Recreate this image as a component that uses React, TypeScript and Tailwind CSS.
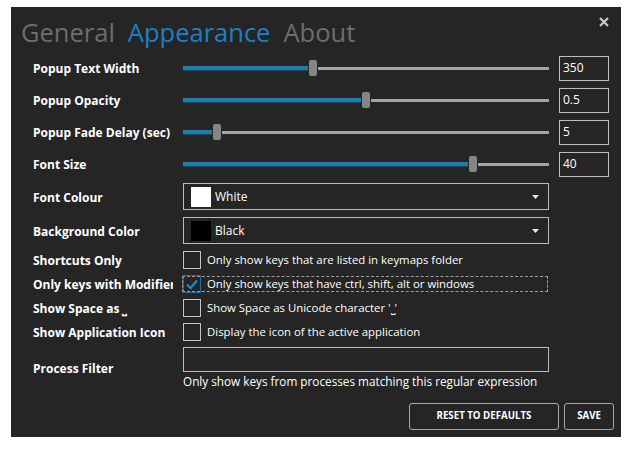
import React from "react";

const font = { fontFamily: '"Open Sans", "Noto Sans", sans-serif' };

function Slider({ blue }: { blue: number }) {
  return (
    <div className="flex items-center h-[16px] w-[366px]">
      <div className="h-[5px] flex flex-col shrink-0" style={{ width: blue }}>
        <div className="h-[4px] bg-[#1b7fb5]" />
        <div className="h-[1px] bg-[#33414a]" />
      </div>
      <div className="w-[8px] h-[16px] mx-[1px] rounded-[2px] bg-[#858585] shrink-0" />
      <div className="flex-1 h-[3px] bg-[#a3a3a3]" />
    </div>
  );
}

function Label({ children }: { children: React.ReactNode }) {
  return (
    <div className="w-[140px] mr-[10px] pt-[2px] shrink-0 overflow-hidden whitespace-nowrap text-white font-bold text-[12px]">
      {children}
    </div>
  );
}

function SliderRow({ label, blue, value }: { label: string; blue: number; value: string }) {
  return (
    <div className="flex items-center h-[32px]">
      <Label>{label}</Label>
      <Slider blue={blue} />
      <div className="ml-[10px] w-[50px] h-[25px] border border-[#bdbdbd] text-white text-[12px] flex items-center pl-[3px]">
        {value}
      </div>
    </div>
  );
}

function Dropdown({ label, swatch, text }: { label: string; swatch: string; text: string }) {
  return (
    <div className="flex items-center h-[27px]">
      <Label>{label}</Label>
      <div className="w-[366px] h-[27px] border border-[#bcbcbc] flex items-center pl-[7px] pr-[9px]">
        <div className="w-[20px] h-[20px]" style={{ background: swatch }} />
        <span className="ml-[4px] text-white text-[12px] flex-1">{text}</span>
        <svg width="7" height="4" viewBox="0 0 7 4">
          <path d="M0 0 H7 L3.5 4 Z" fill="#e8e8e8" />
        </svg>
      </div>
    </div>
  );
}

function CheckRow({
  label,
  text,
  checked,
  focused,
}: {
  label: React.ReactNode;
  text: string;
  checked?: boolean;
  focused?: boolean;
}) {
  return (
    <div className="flex items-center h-[24px]">
      <Label>{label}</Label>
      <div
        className={
          focused
            ? "flex items-center h-[14px] w-[364px] outline-1 outline-dashed outline-[#9c9c9c]"
            : "flex items-center h-[14px]"
        }
      >
        <div
          className={
            checked
              ? "w-[18px] h-[18px] shrink-0 border border-[#1e6ea3] flex items-center justify-center"
              : "w-[18px] h-[18px] shrink-0 border border-[#c4c4c4]"
          }
        >
          {checked && (
            <svg width="12" height="11" viewBox="0 0 12 11">
              <path d="M1 5.5 L4.5 9 L11 1.5" stroke="#2386c8" strokeWidth="2.4" fill="none" />
            </svg>
          )}
        </div>
        <span className="ml-[6px] text-white text-[11.4px] whitespace-nowrap">{text}</span>
      </div>
    </div>
  );
}

export default function App() {
  return (
    <div className="w-[625px] h-[452px] bg-white pt-[7px] pl-[11px]" style={font}>
      <div className="w-[610px] h-[430px] bg-[#252525] flex flex-col">
        <div className="flex items-start h-[45px]">
          <div className="flex gap-[13px] pl-[10px] pt-[8px] text-[25.5px] leading-[34px]">
            <span className="text-[#6d6d6d]">General</span>
            <span className="text-[#1c80c3]">Appearance</span>
            <span className="text-[#6d6d6d]">About</span>
          </div>
          <div className="ml-auto mr-[12px] mt-[10px]">
            <svg width="10" height="10" viewBox="0 0 10 10">
              <path d="M1 1 L9 9 M9 1 L1 9" stroke="#c9c9c9" strokeWidth="2.2" />
            </svg>
          </div>
        </div>
        <div className="pl-[22px] flex flex-col">
          <SliderRow label="Popup Text Width" blue={125} value="350" />
          <SliderRow label="Popup Opacity" blue={178} value="0.5" />
          <SliderRow label="Popup Fade Delay (sec)" blue={29} value="5" />
          <SliderRow label="Font Size" blue={285} value="40" />
          <div className="mt-[3px] flex flex-col gap-[7px]">
            <Dropdown label="Font Colour" swatch="#ffffff" text="White" />
            <Dropdown label="Background Color" swatch="#000000" text="Black" />
          </div>
          <div className="mt-[4px] flex flex-col">
            <CheckRow label="Shortcuts Only" text="Only show keys that are listed in keymaps folder" />
            <CheckRow
              label="Only keys with Modifiers"
              text="Only show keys that have ctrl, shift, alt or windows"
              checked
              focused
            />
            <CheckRow label="Show Space as ⎵" text="Show Space as Unicode character '⎵'" />
            <CheckRow label="Show Application Icon" text="Display the icon of the active application" />
          </div>
          <div className="mt-[3px] flex items-center">
            <Label>Process Filter</Label>
            <div className="flex flex-col">
              <div className="w-[366px] h-[25px] border border-[#bcbcbc]" />
              <div className="text-white text-[11.75px] leading-[16px] mt-[1px] whitespace-nowrap">
                Only show keys from processes matching this regular expression
              </div>
            </div>
          </div>
        </div>
        <div className="flex justify-end gap-[5px] pr-[7px] mt-[14px]">
          <button className="w-[150px] h-[27px] border border-[#a8a8a8] rounded-[3px] text-white text-[9.7px] font-bold">
            RESET TO DEFAULTS
          </button>
          <button className="w-[50px] h-[27px] border border-[#a8a8a8] rounded-[3px] text-white text-[9.7px] font-bold">
            SAVE
          </button>
        </div>
      </div>
    </div>
  );
}
